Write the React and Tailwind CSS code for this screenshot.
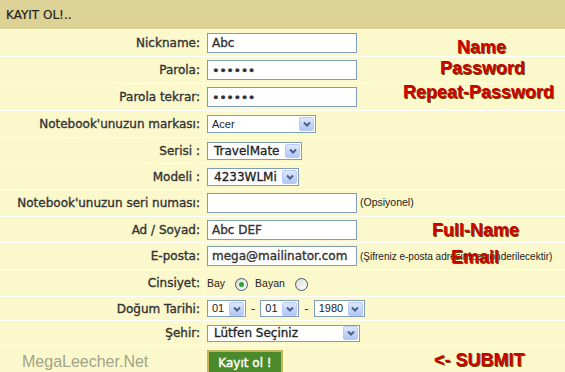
import React from "react";

const Arrow = () => (
  <div className="mr-px flex h-[14px] w-[15px] shrink-0 items-center justify-center rounded-[2px] border border-[#b7cbf3] bg-gradient-to-b from-[#dde7fe] to-[#b1c6f6]">
    <svg width="8" height="6" viewBox="0 0 8 6">
      <path d="M1 1.5 L4 4.5 L7 1.5" fill="none" stroke="#4d6185" strokeWidth="2" />
    </svg>
  </div>
);

const Select = ({ value, className, textClass }) => (
  <div className={`flex items-center border border-[#7f9db9] bg-white ${className}`}>
    <span className={`flex-1 truncate pl-[4px] text-[#222] ${textClass}`}>{value}</span>
    <Arrow />
  </div>
);

const Input = ({ value, password }) => (
  <div className="flex h-[20px] w-[150px] items-center border border-[#7f9db9] bg-white pl-[4px] text-[12px] text-[#333] [-webkit-text-stroke:0.35px]">
    {password ? <span className="pt-[1px] text-[13px] tracking-[-0.5px]">••••••</span> : value}
  </div>
);

const Radio = ({ checked }) => (
  <span className="inline-flex h-[13px] w-[13px] items-center justify-center rounded-full border border-[#3d5a78] bg-gradient-to-br from-[#dcdcd6] to-white">
    {checked && <span className="h-[5px] w-[5px] rounded-full bg-[#2aa52a]" />}
  </span>
);

const Row = ({ label, h, children, left }) => (
  <>
    <div className={`flex items-center justify-end bg-[#fbf8cb] pr-[3px] text-[12px] text-[#333] [-webkit-text-stroke:0.35px] ${h}`}>
      {left || label}
    </div>
    <div className={`flex items-center bg-[#fbf8cb] pl-[3px] ${h}`}>{children}</div>
  </>
);

const Note = ({ children, size }) => (
  <span className={`ml-[3px] text-[#222] [font-family:'Liberation_Sans',Arial,sans-serif] ${size}`}>{children}</span>
);

const red = "absolute leading-none text-[18px] font-bold text-[#cc0000] [text-shadow:1px_1px_0_#6b4a00] [font-family:'Liberation_Sans',Arial,sans-serif]";

export default function App() {
  return (
    <div className="relative h-[372px] w-[565px] overflow-hidden bg-white [font-family:'DejaVu_Sans',Verdana,sans-serif]">
      <div className="grid grid-cols-[203px_1fr] gap-px bg-white">
        <div className="col-span-2 flex h-[29px] items-center bg-[#dcd296] pl-[6px] text-[12px] text-[#222] [-webkit-text-stroke:0.2px]">
          KAYIT OL!..
        </div>

        <Row label="Nickname:" h="h-[26px]">
          <Input value="Abc" />
        </Row>
        <Row label="Parola:" h="h-[26px]">
          <Input password />
        </Row>
        <Row label="Parola tekrar:" h="h-[26px]">
          <Input password />
        </Row>
        <Row label="Notebook'unuzun markası:" h="h-[26px]">
          <Select value="Acer" className="h-[18px] w-[109px]" textClass="text-[11px] [font-family:'Liberation_Sans',Arial,sans-serif]" />
        </Row>
        <Row label="Serisi :" h="h-[25px]">
          <Select value="TravelMate" className="h-[18px] w-[95px]" textClass="text-[12px] pl-[6px] [-webkit-text-stroke:0.3px]" />
        </Row>
        <Row label="Modeli :" h="h-[25px]">
          <Select value="4233WLMi" className="h-[18px] w-[92px]" textClass="text-[12px] pl-[6px] [-webkit-text-stroke:0.3px]" />
        </Row>
        <Row label="Notebook'unuzun seri numası:" h="h-[26px]">
          <Input value="" />
          <Note size="text-[10.5px]">(Opsiyonel)</Note>
        </Row>
        <Row label="Ad / Soyad:" h="h-[25px]">
          <Input value="Abc DEF" />
        </Row>
        <Row label="E-posta:" h="h-[26px]">
          <Input value="mega@mailinator.com" />
          <Note size="text-[10px]">(Şifreniz e-posta adresinize gönderilecektir)</Note>
        </Row>
        <Row label="Cinsiyet:" h="h-[26px]">
          <div className="flex items-center pt-[2px] text-[10.5px] text-[#222] [font-family:'Liberation_Sans',Arial,sans-serif]">
            <span className="mr-[10px]">Bay</span>
            <Radio checked />
            <span className="ml-[7px] mr-[10px]">Bayan</span>
            <Radio />
          </div>
        </Row>
        <Row label="Doğum Tarihi:" h="h-[23px]">
          <div className="flex items-center text-[12px] text-[#333]">
            <Select value="01" className="h-[17px] w-[39px]" textClass="text-[11px] [font-family:'Liberation_Sans',Arial,sans-serif]" />
            <span className="mx-[5px]">-</span>
            <Select value="01" className="h-[17px] w-[39px]" textClass="text-[11px] [font-family:'Liberation_Sans',Arial,sans-serif]" />
            <span className="mx-[5px]">-</span>
            <Select value="1980" className="h-[17px] w-[51px]" textClass="text-[11px] [font-family:'Liberation_Sans',Arial,sans-serif]" />
          </div>
        </Row>
        <Row label="Şehir:" h="h-[24px]">
          <Select value="Lütfen Seçiniz" className="h-[17px] w-[153px]" textClass="text-[12px] pl-[6px] [-webkit-text-stroke:0.3px]" />
        </Row>
        <Row
          h="h-[30px]"
          left={
            <span className="mr-auto pl-[22px] pt-[2px] text-[16px] text-[#a3a38c] [-webkit-text-stroke:0px] [font-family:'Liberation_Sans',Arial,sans-serif]">
              MegaLeecher.Net
            </span>
          }
        >
          <button className="mt-[4px] flex h-[26px] w-[76px] items-center justify-center self-start border-2 border-[#c2b55c] bg-[#4b8a2b] text-[12px] text-white [-webkit-text-stroke:0.4px]">
            Kayıt ol !
          </button>
        </Row>
      </div>

      <span className={`${red} left-[457px] top-[38px]`}>Name</span>
      <span className={`${red} left-[440px] top-[59px]`}>Password</span>
      <span className={`${red} left-[403px] top-[83px]`}>Repeat-Password</span>
      <span className={`${red} left-[432px] top-[221px]`}>Full-Name</span>
      <span className={`${red} left-[451px] top-[248px]`}>Email</span>
      <span className={`${red} left-[434px] top-[351px]`}>&lt;- SUBMIT</span>
    </div>
  );
}
